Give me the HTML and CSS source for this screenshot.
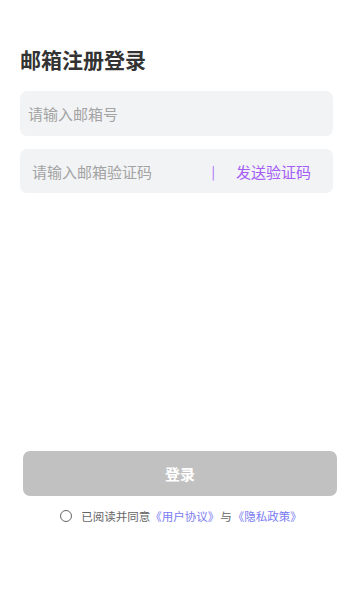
FILE: index.html
```html
<!DOCTYPE html>
<html lang="zh-CN">

<head>
    <meta charset="UTF-8">
    <title>邮箱注册登录</title>
    <link rel="stylesheet" href="styles.css">
</head>

<body>
    <div class="page">
        <h1 class="titulo">邮箱注册登录</h1>

        <div class="campo">
            <input class="entrada" placeholder="请输入邮箱号">
        </div>

        <div class="campo campo-codigo">
            <input class="entrada" placeholder="请输入邮箱验证码">
            <span class="separador">|</span>
            <a href="#" class="enviar">发送验证码</a>
        </div>

        <div class="espacio"></div>

        <button class="btn-login" type="button">登录</button>

        <div class="acuerdo">
            <span class="circulo"></span>
            <span>已阅读并同意</span><a href="#" class="enlace">《用户协议》</a><span class="con">与</span><a href="#" class="enlace">《隐私政策》</a>
        </div>
    </div>
</body>

</html>
```

FILE: styles.css
```css
body {
    margin: 0;
    font-family: "Noto Sans CJK SC", "Noto Sans", sans-serif;
    background: white;
}

.page {
    height: 600px;
    display: flex;
    flex-direction: column;
    padding: 0 27px 0 20px;
    box-sizing: border-box;
}

.titulo {
    margin: 44px 0 17px;
    font-size: 21px;
    line-height: 30px;
    font-weight: bold;
    color: #333;
}

.campo {
    height: 45px;
    background-color: #f2f3f5;
    border-radius: 7px;
    display: flex;
    align-items: center;
    padding: 0 8px;
    margin-bottom: 13px;
}

.campo-codigo {
    height: 44px;
    padding: 0 22px 0 12px;
}

.entrada {
    flex-grow: 1;
    min-width: 0;
    border: none;
    outline: none;
    background: transparent;
    font-family: inherit;
    font-size: 15px;
    color: #333;
    padding: 0;
}

.entrada::placeholder {
    color: #a3a3a3;
}

.separador {
    color: #a55df5;
    font-size: 13px;
    margin-right: 21px;
}

.enviar {
    color: #a55df5;
    font-size: 15px;
    text-decoration: none;
}

.espacio {
    flex-grow: 1;
}

.btn-login {
    margin: 0 -4px 0 3px;
    height: 45px;
    border: none;
    border-radius: 7px;
    background-color: #c1c1c1;
    color: white;
    font-family: inherit;
    font-size: 15px;
    font-weight: bold;
}

.acuerdo {
    margin: 12px 0 76px;
    display: flex;
    align-items: center;
    justify-content: center;
    font-size: 11.5px;
    line-height: 16px;
    color: #666;
    padding-left: 9px;
}

.circulo {
    width: 10px;
    height: 10px;
    border: 1px solid #666;
    border-radius: 50%;
    margin-right: 9px;
}

.enlace {
    color: #7b7bf2;
    text-decoration: none;
}

.con {
    margin: 0 1px;
}
```
